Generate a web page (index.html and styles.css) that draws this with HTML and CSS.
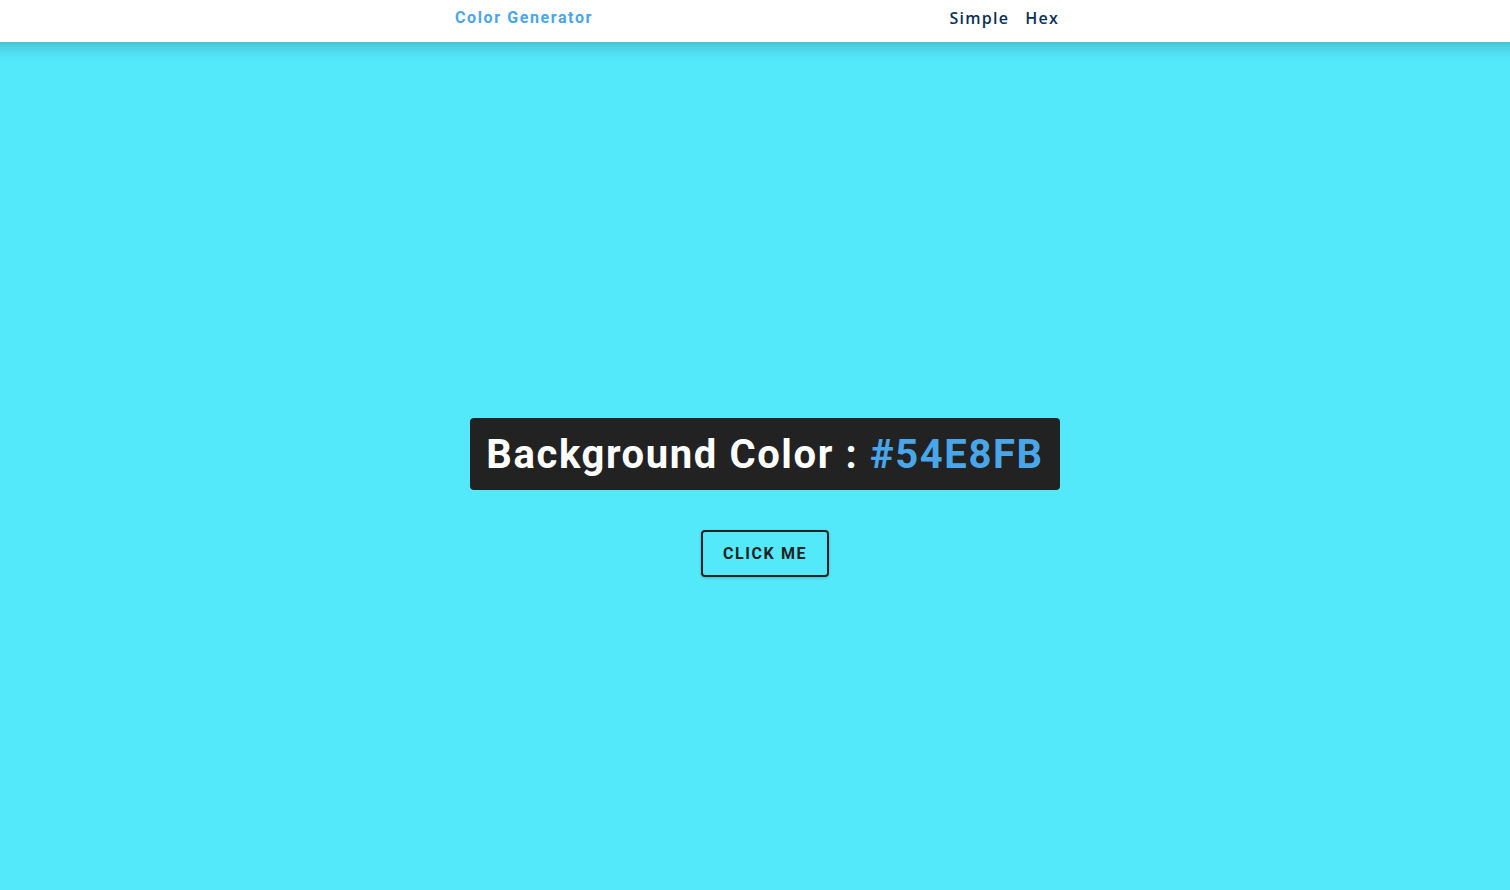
FILE: index.html
```
<!DOCTYPE html>
<html lang="en">
<head>
<meta charset="UTF-8">
<title>Color Generator</title>
<link rel="stylesheet" href="styles.css">
</head>
<body>
<nav class="nav">
  <div class="nav-center">
    <h4 class="brand">Color Generator</h4>
    <ul class="nav-links">
      <li><a class="nav-link" href="#">Simple</a></li>
      <li><a class="nav-link" href="#">Hex</a></li>
    </ul>
  </div>
</nav>
<main class="main">
  <h2 class="title">Background Color : <span class="color">#54E8FB</span></h2>
  <button class="btn" type="button">Click me</button>
</main>
</body>
</html>
```
FILE: styles.css
```
* { margin: 0; padding: 0; box-sizing: border-box; }
body {
  background: #54e8fb;
  font-family: "Open Sans", sans-serif;
  font-size: 16px;
  line-height: 1.5;
  color: #102a42;
  overflow: hidden;
}
.nav {
  height: 42px;
  margin: 0 -30px;
  background: #fff;
  box-shadow: 0 5px 15px rgba(0, 0, 0, 0.2);
}
.nav-center {
  width: 620px;
  height: 42px;
  margin: 0 auto;
  padding: 0 6px 0 10px;
  display: flex;
  justify-content: space-between;
}
.brand {
  font: 700 16px/20px Roboto, sans-serif;
  letter-spacing: 1.6px;
  color: #49a6e9;
  padding-top: 8px;
}
.nav-links { display: flex; gap: 16px; list-style: none; padding-top: 6px; }
.nav-link {
  font-weight: 600;
  letter-spacing: 1.25px;
  color: #0a3057;
  text-decoration: none;
}
.main {
  height: 848px;
  padding: 376px 0 0 20px;
  display: flex;
  flex-direction: column;
  align-items: center;
}
.title {
  height: 72px;
  padding: 0 16px;
  background: #222;
  border-radius: 4px;
  font: 700 40px/74px Roboto, sans-serif;
  letter-spacing: 1.6px;
  color: #fff;
  white-space: nowrap;
}
.color { color: #49a6e9; }
.btn {
  margin-top: 40px;
  width: 128px;
  height: 47px;
  border: 2px solid #222;
  border-radius: 4px;
  background: transparent;
  box-shadow: 0 1px 3px rgba(0, 0, 0, 0.2);
  font: 700 16px Roboto, sans-serif;
  letter-spacing: 1.6px;
  text-transform: uppercase;
  color: #222;
}
```
